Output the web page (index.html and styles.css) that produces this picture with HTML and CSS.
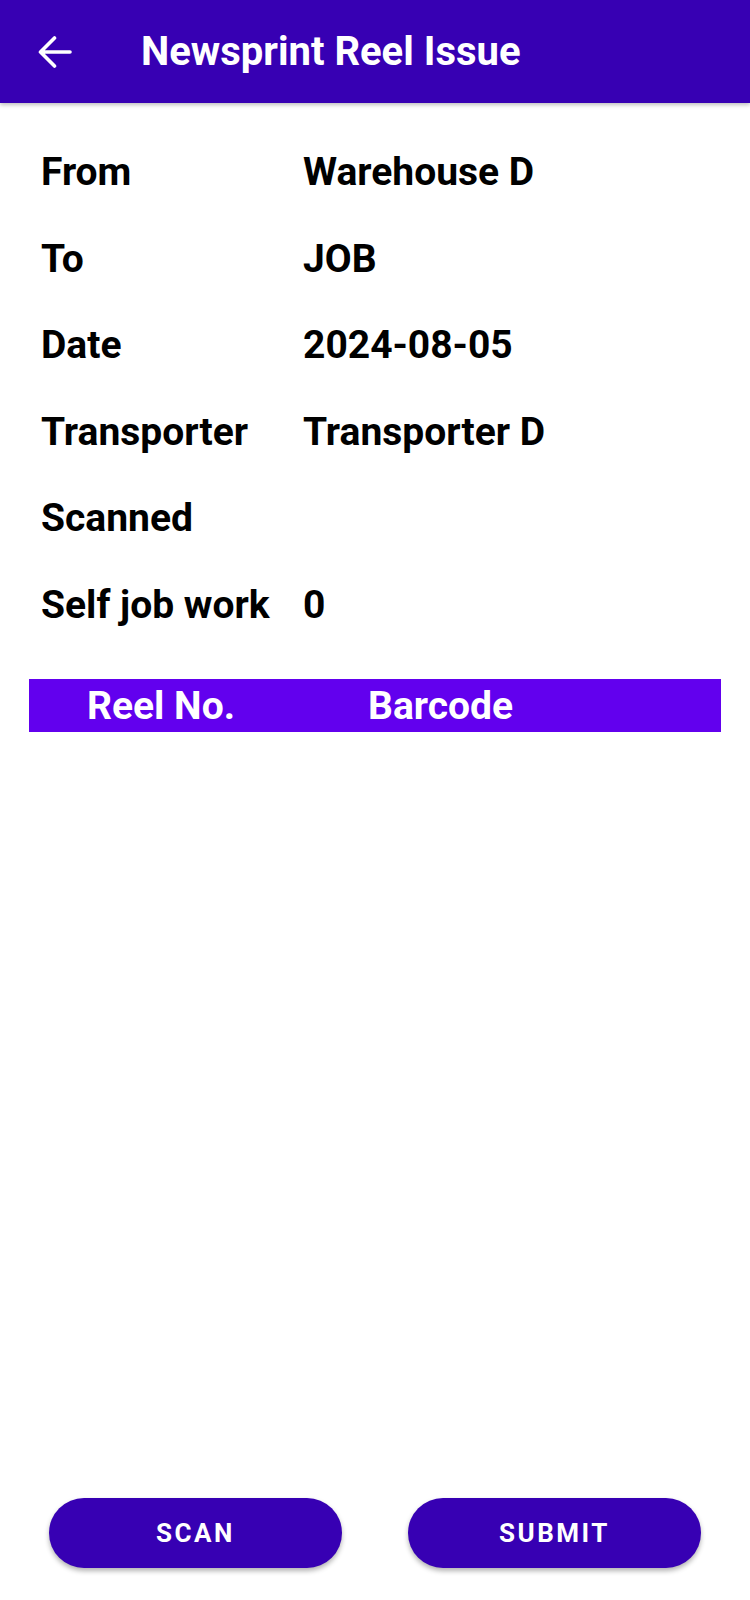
FILE: index.html
```html
<!DOCTYPE html>
<html>
<head>
<meta charset="utf-8">
<link rel="stylesheet" href="styles.css">
</head>
<body>
<div class="screen">
  <header class="appbar">
    <svg class="back" viewBox="0 0 34 32" width="34" height="32"><path d="M32 16H3M16.5 2L2.5 16l14 14" fill="none" stroke="#fff" stroke-width="3.6" stroke-linecap="round" stroke-linejoin="round"/></svg>
    <h1 class="title">Newsprint Reel Issue</h1>
  </header>
  <main class="details">
    <div class="row"><span class="label">From</span><span class="value">Warehouse D</span></div>
    <div class="row"><span class="label">To</span><span class="value">JOB</span></div>
    <div class="row"><span class="label">Date</span><span class="value">2024-08-05</span></div>
    <div class="row"><span class="label">Transporter</span><span class="value">Transporter D</span></div>
    <div class="row"><span class="label">Scanned</span><span class="value"></span></div>
    <div class="row"><span class="label">Self job work</span><span class="value">0</span></div>
  </main>
  <div class="table-head">
    <span class="col-reel">Reel No.</span>
    <span class="col-barcode">Barcode</span>
  </div>
  <div class="spacer"></div>
  <footer class="actions">
    <button class="btn">SCAN</button>
    <button class="btn">SUBMIT</button>
  </footer>
</div>
</body>
</html>
```
FILE: styles.css
```css
html, body {
  margin: 0;
  padding: 0;
  background: #ffffff;
}
body {
  font-family: Roboto, "Liberation Sans", sans-serif;
}
.screen {
  width: 750px;
  height: 1600px;
  display: flex;
  flex-direction: column;
}
.appbar {
  height: 103px;
  background: #3700b3;
  display: flex;
  align-items: center;
  padding-left: 38px;
  box-shadow: 0 2px 4px rgba(0,0,0,0.25);
  flex-shrink: 0;
}
.back {
  display: block;
}
.title {
  margin: 0 0 0 69px;
  color: #ffffff;
  font-size: 40px;
  font-weight: 700;
  letter-spacing: 0;
}
.details {
  padding: 26px 41px 0;
}
.row {
  display: grid;
  grid-template-columns: 262px 1fr;
  height: 86.5px;
  align-items: center;
  font-size: 39px;
  font-weight: 700;
  color: #000000;
}
.table-head {
  margin: 31px 29px 0;
  height: 53px;
  background: #6200ee;
  display: flex;
  align-items: center;
  color: #ffffff;
  font-size: 39px;
  font-weight: 700;
}
.col-reel {
  margin-left: 58px;
  width: 281px;
}
.spacer {
  flex: 1;
}
.actions {
  display: flex;
  padding: 0 49px 32px;
  justify-content: space-between;
}
.btn {
  width: 293px;
  height: 70px;
  border: none;
  border-radius: 35px;
  background: #3700b3;
  color: #ffffff;
  font-family: Roboto, "Liberation Sans", sans-serif;
  font-size: 26px;
  font-weight: 700;
  letter-spacing: 2.5px;
  box-shadow: 0 3px 5px rgba(0,0,0,0.3);
}
```
